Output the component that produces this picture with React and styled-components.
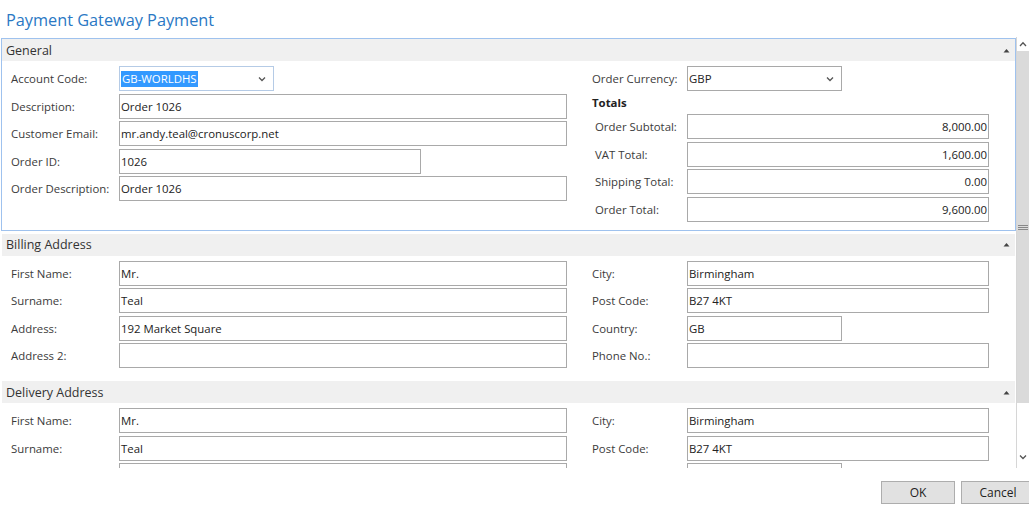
import React from "react";
import styled, { createGlobalStyle } from "styled-components";

const Global = createGlobalStyle`
  html, body {
    margin: 0;
    padding: 0;
    background: #fff;
    overflow: hidden;
  }
  body {
    font-family: "Open Sans", "Noto Sans", "Liberation Sans", sans-serif;
    font-size: 11.4px;
    color: #333;
  }
`;

const Page = styled.div`
  width: 1029px;
  height: 509px;
  display: flex;
  flex-direction: column;
  overflow: hidden;
`;

const Title = styled.h1`
  margin: 0;
  height: 37px;
  padding: 8px 0 0 6px;
  box-sizing: border-box;
  font-size: 16.3px;
  font-weight: 400;
  color: #2a78c4;
  line-height: 24px;
`;

const ScrollArea = styled.div`
  display: flex;
  height: 431px;
`;

const Content = styled.div`
  flex: 1;
  overflow: hidden;
  padding-top: 1px;
`;

const Section = styled.section`
  border: 1px solid ${(p) => (p.$focused ? "#9fc2ee" : "transparent")};
  margin: 0 0 ${(p) => p.$gap || 0}px 1px;
`;

const SectionHeader = styled.div`
  display: flex;
  align-items: center;
  justify-content: space-between;
  height: 22px;
  background: #f0f0f0;
  padding: 0 5px 0 4px;
  font-size: 12.5px;
  color: #333;
`;

const Body = styled.div`
  display: grid;
  grid-template-columns: 556px 396px;
  column-gap: 25px;
  padding: 5px 0 ${(p) => p.$pb || 0}px 9px;
`;

const Column = styled.div`
  display: flex;
  flex-direction: column;
  gap: 2.5px;
`;

const Row = styled.div`
  display: flex;
  align-items: center;
  height: 25px;
  padding-left: ${(p) => p.$indent || 0}px;
`;

const Label = styled.label`
  width: ${(p) => p.$w}px;
  flex-shrink: 0;
  color: #3b3b3b;
  white-space: nowrap;
`;

const Field = styled.div`
  box-sizing: border-box;
  height: 25px;
  width: ${(p) => (p.$w ? `${p.$w}px` : "auto")};
  flex: ${(p) => (p.$w ? "none" : 1)};
  border: 1px solid ${(p) => (p.$focus ? "#b5cbe6" : "#a9a9a9")};
  background: #fff;
  display: flex;
  align-items: center;
  justify-content: ${(p) => (p.$right ? "flex-end" : "space-between")};
  padding: 0 ${(p) => (p.$select ? 7 : 1)}px 0 1px;
  color: #222;
  white-space: nowrap;
`;

const Selected = styled.span`
  background: #3399ff;
  color: #fff;
  padding: 0 1px;
  line-height: 16px;
`;

const Heading = styled.div`
  font-weight: 700;
  color: #222;
  height: 18px;
  line-height: 18px;
`;

const Scrollbar = styled.div`
  width: 12px;
  border-left: 1px solid #d6d6d6;
  display: flex;
  flex-direction: column;
  background: #fff;
`;

const ScrollBtn = styled.div`
  height: 14px;
  display: flex;
  align-items: center;
  justify-content: center;
  margin: ${(p) => (p.$down ? "auto 0 4px" : "0")};
`;

const Thumb = styled.div`
  height: 352px;
  background: #dadada;
  display: flex;
  align-items: center;
  justify-content: center;
  flex-direction: column;
  gap: 1px;
  span {
    display: block;
    width: 10px;
    height: 1px;
    background: #888;
  }
`;

const Footer = styled.div`
  flex: 1;
  display: flex;
  justify-content: flex-end;
  align-items: flex-start;
  gap: 6px;
  padding-top: 13px;
  margin-right: -6px;
`;

const Button = styled.button`
  width: 74px;
  height: 23px;
  background: #e1e1e1;
  border: 1px solid #adadad;
  font-family: inherit;
  font-size: 12px;
  color: #222;
  padding: 0;
`;

const Caret = ({ up }) => (
  <svg width="8" height="6" viewBox="0 0 8 6">
    <path d={up ? "M1 5 L4 1.8 L7 5" : "M1 1.5 L4 4.5 L7 1.5"} fill="none" stroke="#555" strokeWidth="1.3" />
  </svg>
);

const Collapse = () => (
  <svg width="7" height="5" viewBox="0 0 7 5">
    <path d="M0.5 4.5 L3.5 1 L6.5 4.5 Z" fill="#444" />
  </svg>
);

function F({ label, value, w, lw = 108, right, select, focus, selected, indent }) {
  return (
    <Row $indent={indent}>
      <Label $w={lw}>{label}</Label>
      <Field $w={w} $right={right} $select={select} $focus={focus}>
        {selected ? <Selected>{value}</Selected> : <span>{value}</span>}
        {select && <Caret />}
      </Field>
    </Row>
  );
}

function Address({ title }) {
  return (
    <Section $gap={11}>
      <SectionHeader>
        {title}
        <Collapse />
      </SectionHeader>
      <Body $pb={0}>
        <Column>
          <F label="First Name:" value="Mr." />
          <F label="Surname:" value="Teal" />
          <F label="Address:" value="192 Market Square" />
          <F label="Address 2:" value="" />
        </Column>
        <Column>
          <F label="City:" value="Birmingham" lw={95} w={302} />
          <F label="Post Code:" value="B27 4KT" lw={95} w={302} />
          <F label="Country:" value="GB" lw={95} w={155} />
          <F label="Phone No.:" value="" lw={95} w={302} />
        </Column>
      </Body>
    </Section>
  );
}

export default function App() {
  return (
    <Page>
      <Global />
      <Title>Payment Gateway Payment</Title>
      <ScrollArea>
        <Content>
          <Section $focused $gap={2}>
            <SectionHeader>
              General
              <Collapse />
            </SectionHeader>
            <Body $pb={8}>
              <Column>
                <F label="Account Code:" value="GB-WORLDHS" w={155} select focus selected />
                <F label="Description:" value="Order 1026" />
                <F label="Customer Email:" value="mr.andy.teal@cronuscorp.net" />
                <F label="Order ID:" value="1026" w={302} />
                <F label="Order Description:" value="Order 1026" />
              </Column>
              <Column>
                <F label="Order Currency:" value="GBP" lw={95} w={155} select />
                <Heading>Totals</Heading>
                <F label="Order Subtotal:" value="8,000.00" lw={92} w={302} right indent={3} />
                <F label="VAT Total:" value="1,600.00" lw={92} w={302} right indent={3} />
                <F label="Shipping Total:" value="0.00" lw={92} w={302} right indent={3} />
                <F label="Order Total:" value="9,600.00" lw={92} w={302} right indent={3} />
              </Column>
            </Body>
          </Section>
          <Address title="Billing Address" />
          <Address title="Delivery Address" />
        </Content>
        <Scrollbar>
          <ScrollBtn>
            <Caret up />
          </ScrollBtn>
          <Thumb>
            <span />
            <span />
            <span />
          </Thumb>
          <ScrollBtn $down>
            <Caret />
          </ScrollBtn>
        </Scrollbar>
      </ScrollArea>
      <Footer>
        <Button>OK</Button>
        <Button>Cancel</Button>
      </Footer>
    </Page>
  );
}
